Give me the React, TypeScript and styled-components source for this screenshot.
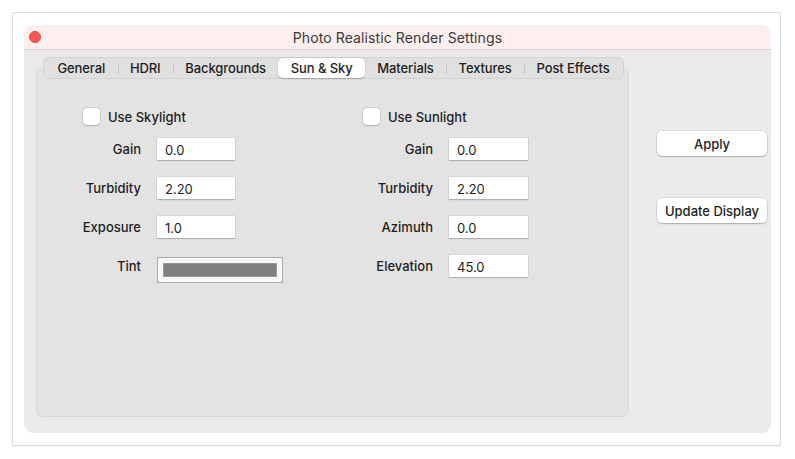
import styled, { createGlobalStyle } from "styled-components";

const GlobalStyle = createGlobalStyle`
	html, body {
		margin: 0;
		padding: 0;
		background: #ffffff;
	}
	body {
		font-family: "Inter", "Liberation Sans", sans-serif;
		color: #262626;
		width: 795px;
		height: 459px;
		overflow: hidden;
	}
`;

const tabs = ["General", "HDRI", "Backgrounds", "Sun & Sky", "Materials", "Textures", "Post Effects"];
const activeTab = "Sun & Sky";

const skyFields = [
	{ label: "Gain", value: "0.0" },
	{ label: "Turbidity", value: "2.20" },
	{ label: "Exposure", value: "1.0" }
];

const sunFields = [
	{ label: "Gain", value: "0.0" },
	{ label: "Turbidity", value: "2.20" },
	{ label: "Azimuth", value: "0.0" },
	{ label: "Elevation", value: "45.0" }
];

const App = () => {
	return (
		<>
			<GlobalStyle />
			<Frame>
				<Window>
					<TitleBar>
						<CloseDot />
						<Title>Photo Realistic Render Settings</Title>
					</TitleBar>
					<Body>
						<MainColumn>
							<TabBar>
								{tabs.map((t, i) => {
									const prevActive = i > 0 && tabs[i - 1] === activeTab;
									const showSep = i > 0 && t !== activeTab && !prevActive;
									return (
										<Tab key={t} active={t === activeTab} sep={showSep}>
											{t}
										</Tab>
									);
								})}
							</TabBar>
							<Panel>
								<Group labelWidth={58} inputWidth={78}>
									<CheckRow>
										<Check />
										<span>Use Skylight</span>
									</CheckRow>
									{skyFields.map((f) => (
										<Row key={f.label}>
											<Label>{f.label}</Label>
											<Field defaultValue={f.value} />
										</Row>
									))}
									<Row>
										<Label>Tint</Label>
										<ColorWell>
											<Swatch />
										</ColorWell>
									</Row>
								</Group>
								<Group labelWidth={70} inputWidth={79}>
									<CheckRow>
										<Check />
										<span>Use Sunlight</span>
									</CheckRow>
									{sunFields.map((f) => (
										<Row key={f.label}>
											<Label>{f.label}</Label>
											<Field defaultValue={f.value} />
										</Row>
									))}
								</Group>
							</Panel>
						</MainColumn>
						<SideColumn>
							<Button>Apply</Button>
							<Button>Update Display</Button>
						</SideColumn>
					</Body>
				</Window>
			</Frame>
		</>
	);
};

const Frame = styled.div`
	margin: 12px 0 0 12px;
	width: 769px;
	height: 434px;
	box-sizing: border-box;
	border: 1px solid #dcdcdc;
	border-radius: 2px;
	background: #ffffff;
	box-shadow: 0 1px 1px rgba(0, 0, 0, 0.06);
	padding: 12px 0 0 11px;
`;

const Window = styled.div`
	width: 747px;
	height: 408px;
	background: #ebebeb;
	border-radius: 9px;
	overflow: hidden;
	display: flex;
	flex-direction: column;
`;

const TitleBar = styled.div`
	height: 24px;
	flex: none;
	background: #fcefed;
	border-bottom: 1px solid #d9d2d0;
	display: flex;
	align-items: center;
	justify-content: center;
	position: relative;
`;

const CloseDot = styled.div`
	position: absolute;
	left: 5px;
	top: 6px;
	width: 12px;
	height: 12px;
	border-radius: 50%;
	background: #fc5753;
	border: 0.5px solid #df4744;
	box-sizing: border-box;
`;

const Title = styled.div`
	font-size: 14px;
	color: #3a3a3a;
	letter-spacing: 0.1px;
	padding-top: 1px;
`;

const Body = styled.div`
	flex: 1;
	display: flex;
	padding: 7px 0 16px 12px;
`;

const MainColumn = styled.div`
	width: 593px;
	flex: none;
	display: flex;
	flex-direction: column;
`;

const TabBar = styled.div`
	align-self: flex-start;
	margin-left: 7px;
	width: 581px;
	height: 22px;
	box-sizing: border-box;
	display: flex;
	align-items: stretch;
	background: #e0e0e0;
	border: 1px solid #d2d2d2;
	border-radius: 6px;
	margin-bottom: -11px;
	position: relative;
	z-index: 1;
	padding: 0 1px;
`;

const Tab = styled.div<{ active?: boolean; sep?: boolean }>`
	position: relative;
	flex: 1 1 auto;
	display: flex;
	align-items: center;
	justify-content: center;
	white-space: nowrap;
	padding: 0 8px;
	font-size: 13px;
	font-weight: 500;
	letter-spacing: -0.1px;
	color: #1e1e1e;
	border-radius: 5px;
	background: ${(p) => (p.active ? "#ffffff" : "transparent")};
	box-shadow: ${(p) => (p.active ? "0 0.5px 1.5px rgba(0,0,0,0.25)" : "none")};

	&::before {
		content: "";
		display: ${(p) => (p.sep ? "block" : "none")};
		position: absolute;
		left: 0;
		top: 5px;
		height: 11px;
		width: 1px;
		background: #c8c8c8;
	}
`;

const Panel = styled.div`
	flex: 1;
	box-sizing: border-box;
	background: #e3e3e3;
	border: 1px solid #d9d9d9;
	border-radius: 6px;
	padding: 39px 0 0 46px;
	display: flex;
	gap: 128px;
	align-items: flex-start;
`;

const Group = styled.div<{ labelWidth: number; inputWidth: number }>`
	display: grid;
	grid-template-columns: ${(p) => p.labelWidth}px ${(p) => p.inputWidth}px;
	column-gap: 16px;
	row-gap: 17px;
`;

const CheckRow = styled.label`
	grid-column: 1 / span 2;
	display: flex;
	align-items: center;
	gap: 8px;
	height: 17px;
	font-size: 13px;
	font-weight: 500;
	color: #1e1e1e;
	margin-bottom: -4px;
`;

const Check = styled.span`
	width: 17px;
	height: 17px;
	box-sizing: border-box;
	border-radius: 4px;
	background: #ffffff;
	box-shadow: 0 0 0 0.5px rgba(0, 0, 0, 0.12), 0 0.5px 1.5px rgba(0, 0, 0, 0.2);
`;

const Row = styled.div`
	display: contents;
`;

const Label = styled.div`
	display: flex;
	align-items: center;
	justify-content: flex-end;
	white-space: nowrap;
	font-size: 13px;
	font-weight: 500;
	color: #1e1e1e;
	height: 22px;
`;

const Field = styled.input`
	box-sizing: border-box;
	width: 100%;
	height: 22px;
	border: none;
	background: #ffffff;
	padding: 1px 0 0 8px;
	font-family: "Inter", "Liberation Sans", sans-serif;
	font-size: 13px;
	color: #1e1e1e;
	box-shadow: 0 0 0 0.5px rgba(0, 0, 0, 0.1), 0 1px 1px rgba(0, 0, 0, 0.18);
	outline: none;
`;

const ColorWell = styled.div`
	width: 126px;
	height: 26px;
	box-sizing: border-box;
	margin-top: 2px;
	border: 1px solid #a8a8a8;
	background: #f8f8f8;
	padding: 5px;
	display: flex;
`;

const Swatch = styled.div`
	flex: 1;
	background: #808080;
	border: 1px solid #9a9a9a;
`;

const SideColumn = styled.div`
	display: flex;
	flex-direction: column;
	gap: 42px;
	margin-left: 28px;
	padding-top: 74px;
`;

const Button = styled.button`
	width: 110px;
	height: 25px;
	border: none;
	border-radius: 5px;
	background: #ffffff;
	font-family: "Inter", "Liberation Sans", sans-serif;
	font-size: 13px;
	font-weight: 500;
	color: #1e1e1e;
	box-shadow: 0 0 0 0.5px rgba(0, 0, 0, 0.12), 0 1px 1.5px rgba(0, 0, 0, 0.22);
	padding: 0;
`;

export default App;
